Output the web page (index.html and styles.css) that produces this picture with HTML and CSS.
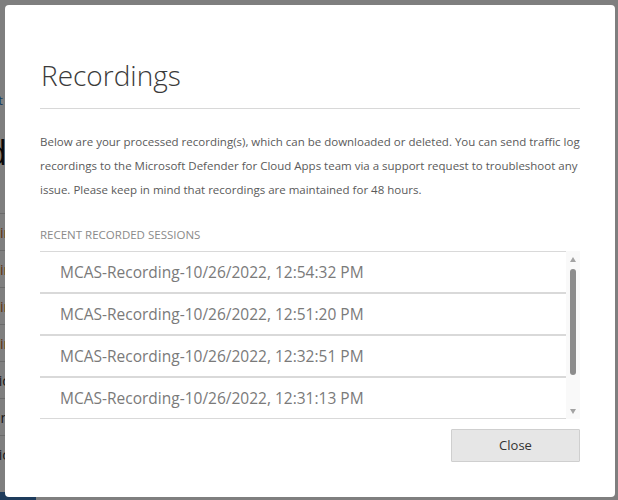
FILE: index.html
```html
<!DOCTYPE html>
<html>
<head>
<meta charset="utf-8">
<link rel="stylesheet" href="styles.css">
</head>
<body>
<div class="page">
  <div class="edge crumb-row"><a class="crumb" href="#">Report</a></div>
  <div class="edge title-row"><h1 class="page-title">Recorded</h1></div>
  <div class="table">
    <div class="trow"><span class="cell warn">Admin</span></div>
    <div class="trow"><span class="cell warn">Admin</span></div>
    <div class="trow"><span class="cell warn">Admin</span></div>
    <div class="trow"><span class="cell warn">Admin</span></div>
    <div class="trow"><span class="cell">Public</span></div>
    <div class="trow"><span class="cell">Domain</span></div>
    <div class="trow"><span class="cell">Public</span></div>
  </div>
  <div class="nav-foot"></div>
</div>

<div class="overlay">
  <div class="modal" role="dialog">
    <h2 class="modal-title">Recordings</h2>
    <p class="modal-desc">Below are your processed recording(s), which can be downloaded or deleted. You can send traffic log recordings to the Microsoft Defender for Cloud Apps team via a support request to troubleshoot any issue. Please keep in mind that recordings are maintained for 48 hours.</p>
    <div class="section-label">RECENT RECORDED SESSIONS</div>
    <div class="list-wrap">
      <ul class="rec-list">
        <li class="rec">MCAS-Recording-10/26/2022, 12:54:32 PM</li>
        <li class="rec">MCAS-Recording-10/26/2022, 12:51:20 PM</li>
        <li class="rec">MCAS-Recording-10/26/2022, 12:32:51 PM</li>
        <li class="rec">MCAS-Recording-10/26/2022, 12:31:13 PM</li>
        <li class="rec">MCAS-Recording-10/26/2022, 12:29:40 PM</li>
      </ul>
      <div class="scrollbar">
        <span class="arrow up"></span>
        <span class="thumb"></span>
        <span class="arrow down"></span>
      </div>
    </div>
    <div class="actions">
      <button class="btn">Close</button>
    </div>
  </div>
</div>
</body>
</html>
```

FILE: styles.css
```css
* { box-sizing: border-box; }
html, body { margin: 0; padding: 0; }
body {
  width: 618px;
  height: 500px;
  overflow: hidden;
  background: #fff;
  font-family: "Open Sans", "Noto Sans", sans-serif;
}

/* background page (mostly hidden behind the dialog) */
.page {
  height: 500px;
  display: flex;
  flex-direction: column;
}
.edge {
  width: 4px;
  display: flex;
  justify-content: flex-end;
  white-space: nowrap;
}
.crumb-row {
  margin-top: 92px;
  height: 16px;
  width: 3px;
}
.crumb {
  font-size: 13px;
  color: #2a78c2;
  text-decoration: none;
  line-height: 16px;
}
.title-row {
  margin-top: 24px;
  height: 40px;
  width: 7px;
}
.page-title {
  margin: 0;
  font-size: 34px;
  font-weight: 400;
  line-height: 40px;
  color: #111;
}
.table { margin-top: 41px; }
.trow {
  height: 37px;
  width: 12px;
  border-top: 1px solid #d6d6d6;
  display: flex;
  justify-content: flex-end;
  align-items: center;
  white-space: nowrap;
  font-size: 14px;
}
.trow:nth-child(n+5) { width: 9px; }
.cell { color: #333; }
.cell.warn { color: #c0601a; }
.nav-foot {
  margin-top: auto;
  width: 36px;
  height: 8px;
  background: #3c78b8;
}

/* overlay + modal */
.overlay {
  position: fixed;
  inset: 0;
  background: rgba(0, 0, 0, 0.5);
  padding: 5px 3px 3px 5px;
}
.modal {
  width: 610px;
  height: 492px;
  background: #fff;
  border-radius: 4px;
  padding: 50px 35px 0 35px;
  display: flex;
  flex-direction: column;
}
.modal-title {
  margin: 0;
  font-family: "Open Sans", "Noto Sans", sans-serif;
  font-size: 28px;
  font-weight: 300;
  line-height: 40px;
  color: #3a3a3a;
  padding-left: 1px;
  padding-bottom: 13px;
  border-bottom: 1px solid #d8d8d8;
}
.modal-desc {
  margin: 21px 0 0;
  font-size: 11.5px;
  line-height: 24px;
  color: #5a5a5a;
}
.section-label {
  margin-top: 25px;
  font-size: 11.5px;
  line-height: 16px;
  color: #8a8a8a;
}
.list-wrap {
  margin-top: 8px;
  display: flex;
  height: 168px;
}
.rec-list {
  list-style: none;
  margin: 0;
  padding: 0;
  width: 526px;
  height: 168px;
  overflow: hidden;
}
.rec {
  height: 42px;
  border-top: 1px solid #d9d9d9;
  border-bottom: 1px solid #d9d9d9;
  padding-left: 20px;
  display: flex;
  align-items: center;
  font-size: 15.5px;
  color: #7a7a7a;
}
.scrollbar {
  width: 14px;
  background: #f9f9f9;
  display: flex;
  flex-direction: column;
  align-items: center;
  padding-top: 6px;
  padding-bottom: 5px;
}
.arrow {
  width: 0;
  height: 0;
  border-left: 3.5px solid transparent;
  border-right: 3.5px solid transparent;
}
.arrow.up { border-bottom: 5px solid #a3a3a3; }
.arrow.down { border-top: 5px solid #a3a3a3; margin-top: auto; }
.thumb {
  width: 6px;
  height: 106px;
  margin-top: 7px;
  border-radius: 3px;
  background: #8c8c8c;
}
.actions {
  margin-top: 10px;
  display: flex;
  justify-content: flex-end;
}
.btn {
  width: 129px;
  height: 33px;
  background: #e6e6e6;
  border: 1px solid #cfcfcf;
  border-radius: 1px;
  font-family: "Open Sans", "Noto Sans", sans-serif;
  font-size: 13px;
  color: #333;
  padding: 0 0 2px;
}
```
